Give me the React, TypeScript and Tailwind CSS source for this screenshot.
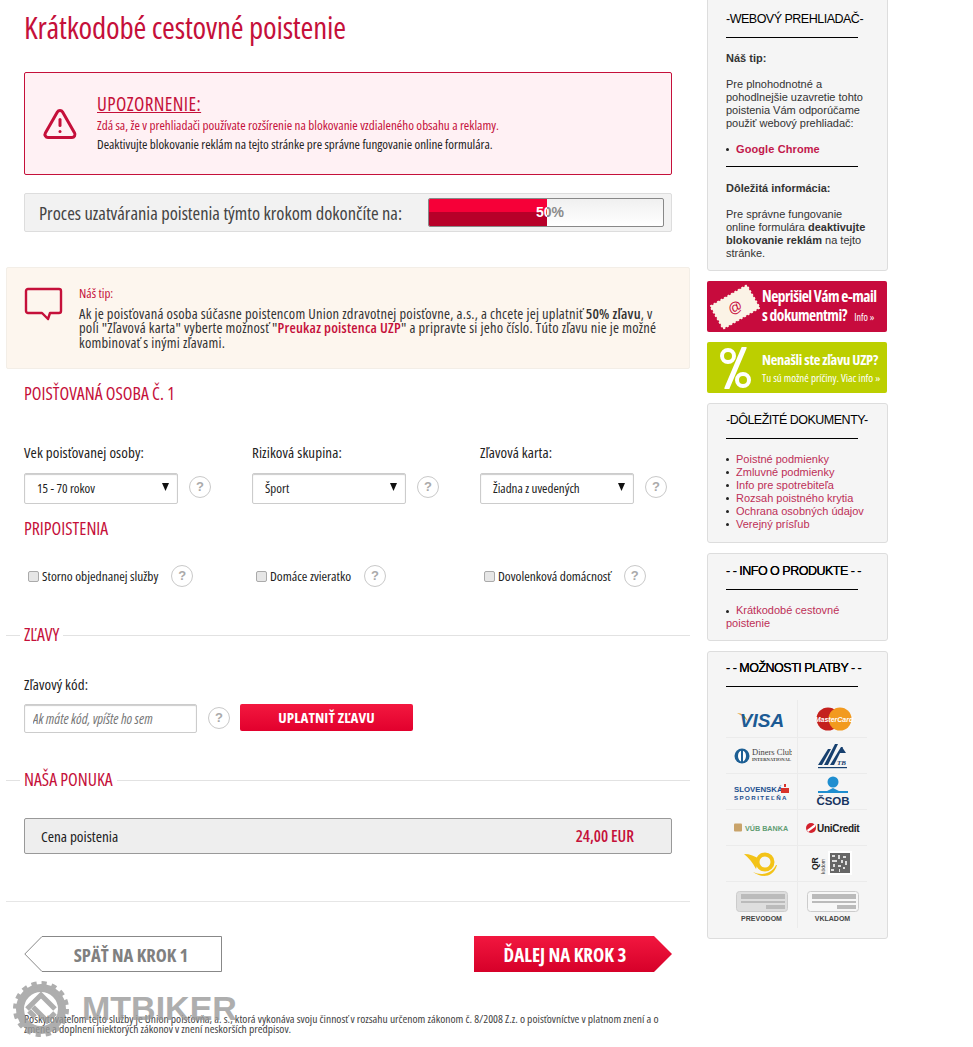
import React from 'react';
import { TriangleAlert } from 'lucide-react';

const condensed = "font-['Open_Sans',sans-serif] font-stretch-[75%]";
const red = 'text-[#c5103a]';

const Help = () => (
    <span className="flex h-[22px] w-[22px] shrink-0 items-center justify-center rounded-full border border-[#c9c9c9] bg-white font-['Liberation_Sans',sans-serif] text-[13px] font-bold text-[#aaaaaa]">
        ?
    </span>
);

const FakeSelect = ({ label }: { label: string }) => (
    <div className="flex w-[228px] shrink-0 items-start gap-[11px]">
        <div className="flex h-[31px] w-[154px] items-center justify-between rounded-[2px] border border-[#cccccc] pl-3 pr-[8px] text-[13px] text-[#222222] shadow-[inset_0_1px_1px_#ccc]">
            <span>{label}</span>
            <svg width="7" height="8" viewBox="0 0 7 8" className="mb-1"><path d="M0 0h7L3.5 8z" fill="#111" /></svg>
        </div>
        <span className="mt-[3px]"><Help /></span>
    </div>
);

const Check = ({ label }: { label: string }) => (
    <label className="flex w-[228px] shrink-0 items-center pl-1 text-[13.4px] text-[#222222]">
        <input type="checkbox" className="mr-[3px] h-[11px] w-[11px] appearance-none rounded-[2px] border border-[#aaaaaa] bg-[#e6e6e6]" />
        <span>{label}</span>
        <span className="ml-[13px]"><Help /></span>
    </label>
);

const SectionLine = ({ title, className }: { title: string; className: string }) => (
    <div className={`flex h-5 items-center ${className}`}>
        <div className="h-px w-[14px] bg-[#e2e2e2]" />
        <span className={`mx-1 pb-[2px] text-[17.8px] ${red}`}>{title}</span>
        <div className="h-px flex-1 bg-[#e2e2e2]" />
    </div>
);

const SideBox = ({ className, children }: { className: string; children: React.ReactNode }) => (
    <div className={`rounded-[3px] border border-[#dddddd] bg-[#f5f5f5] pl-[18px] pr-2 text-[11px] leading-[13px] text-[#333333] ${className}`}>
        {children}
    </div>
);

const SideHead = ({ children, strong }: { children: React.ReactNode; strong?: boolean }) => (
    <div>
        <div className={`whitespace-nowrap text-[12.5px] leading-[15px] tracking-[-.5px] text-black ${strong ? '[text-shadow:0_0_.6px_#000]' : ''}`}>{children}</div>
        <div className="mt-[10px] h-px w-[132px] bg-black" />
    </div>
);

const Bullet = () => <span className="mr-[7px] inline-block h-[3px] w-[3px] shrink-0 rounded-full bg-[#222222] align-middle" />;

const DocLink = ({ children }: { children: React.ReactNode }) => (
    <li className="flex items-center">
        <Bullet />
        <span className="text-[#bd2f57]">{children}</span>
    </li>
);

const logos = [
    <svg key="visa" width="60" height="30" viewBox="0 0 60 30">
        <path d="M5 9c5 0 9 3 11 9-3-4-6-6-11-9z" fill="#e8a93a" />
        <text x="30" y="23" textAnchor="middle" fontFamily="Liberation Sans" fontStyle="italic" fontWeight="700" fontSize="19" fill="#1c5a94">VISA</text>
    </svg>,
    <svg key="mc" width="50" height="30" viewBox="0 0 50 30">
        <circle cx="20" cy="15" r="11.5" fill="#c4201d" />
        <circle cx="32" cy="15" r="11.5" fill="#f29a1f" />
        <text x="26" y="18" textAnchor="middle" fontFamily="Liberation Sans" fontWeight="700" fontStyle="italic" fontSize="7" fill="#fff">MasterCard</text>
    </svg>,
    <svg key="diners" width="60" height="22" viewBox="0 0 60 22">
        <circle cx="10" cy="11" r="7.5" fill="#1d5f94" />
        <ellipse cx="10" cy="11" rx="4" ry="5.5" fill="#fff" />
        <rect x="9" y="5" width="2" height="12" fill="#1d5f94" />
        <text x="20" y="10" fontFamily="Liberation Serif" fontSize="8.5" fill="#444">Diners Club</text>
        <text x="20" y="15.5" fontFamily="Liberation Serif" fontWeight="700" fontSize="4.6" fill="#444">INTERNATIONAL</text>
    </svg>,
    <svg key="tb" width="32" height="28" viewBox="0 0 32 28">
        <path d="M1 23 11 7h3L5 23zM7 23 18 2h3L11 23zM13 23 24 5h2l-9 18zM21 11l4-6 4 6z" fill="#17406f" />
        <rect x="1" y="25" width="29" height="1.2" fill="#17406f" />
        <text x="20" y="23" fontFamily="Liberation Serif" fontStyle="italic" fontWeight="700" fontSize="7" fill="#17406f">TB</text>
    </svg>,
    <svg key="slsp" width="56" height="26" viewBox="0 0 56 26">
        <text x="0" y="13" fontFamily="Liberation Sans" fontWeight="700" fontSize="7.8" fill="#1c4f8f">SLOVENSKÁ</text>
        <text x="0" y="21" fontFamily="Liberation Sans" fontWeight="700" fontSize="6.2" letterSpacing="1.4" fill="#1c4f8f">SPORITEĽŇA</text>
        <path d="M47 9h8v5h-8zM50 5h2v3h-2z" fill="#d8322a" />
    </svg>,
    <svg key="csob" width="34" height="32" viewBox="0 0 34 32">
        <circle cx="17" cy="6" r="5.5" fill="#1f8ed0" />
        <path d="M2 15h9l6-3 6 3h9v2H2z" fill="#1f8ed0" />
        <text x="17" y="29" textAnchor="middle" fontFamily="Liberation Sans" fontWeight="700" fontSize="11.5" fill="#17335f">ČSOB</text>
    </svg>,
    <svg key="vub" width="56" height="14" viewBox="0 0 56 14">
        <rect x="0" y="2.5" width="8" height="8" rx="1" fill="#c9a36a" />
        <text x="11" y="10" fontFamily="Liberation Sans" fontWeight="700" fontSize="7.2" fill="#5f9c72">VÚB BANKA</text>
    </svg>,
    <svg key="uni" width="56" height="16" viewBox="0 0 56 16">
        <circle cx="6" cy="8" r="5" fill="#d3212d" />
        <path d="M2 10 10 4v3l-7 5z" fill="#fff" />
        <text x="12" y="12" fontFamily="Liberation Sans" fontWeight="700" fontSize="10" letterSpacing="-.3" fill="#222">UniCredit</text>
    </svg>,
    <svg key="post" width="36" height="25" viewBox="0 0 36 25">
        <circle cx="21" cy="11" r="7.5" fill="none" stroke="#f3c318" strokeWidth="4" />
        <path d="M0 3c6 0 11 2 15 5l-3 10C9 12 5 7 0 3zM9 21c8 4 19 2 23-7l1 0c-2 8-8 11-13 11-4 0-8-2-11-4z" fill="#f3c318" />
    </svg>,
    <svg key="qr" width="46" height="28" viewBox="0 0 46 28">
        <text x="0" y="0" transform="translate(8 20) rotate(-90)" fontFamily="Liberation Sans" fontWeight="700" fontSize="8.5" fill="#222">QR</text>
        <text x="0" y="0" transform="translate(15 24) rotate(-90)" fontFamily="Liberation Sans" fontSize="5" fill="#333">kódom</text>
        <rect x="18" y="1" width="24" height="24" fill="#fff" />
        <path d="M20 3h20v20H20z" fill="#666" />
        <path d="M22 5h3v2h-3zM28 5h2v4h-2zM33 6h3v2h-3zM22 10h5v2h-5zM31 10h2v3h-2zM35 11h2v4h-2zM23 14h2v3h-2zM28 15h3v2h-3zM33 17h2v2h-2zM21 19h3v2h-3zM29 19h1v3h-1z" fill="#dddddd" />
    </svg>,
];

const SlipLogo = ({ label, dark }: { label: string; dark: boolean }) => (
    <div className="flex flex-col items-center gap-[2px] pt-[4px]">
        <svg width="52" height="21" viewBox="0 0 52 21">
            <rect x=".5" y=".5" width="51" height="20" rx="3" fill={dark ? '#dedede' : '#f7f7f7'} stroke="#cccccc" />
            <rect x="5" y="3" width="44" height="5" fill="#bbbbbb" />
            <rect x="5" y="10" width="44" height="2" fill="#bbbbbb" />
            <rect x="30" y="14" width="19" height="4" fill="#bbbbbb" />
        </svg>
        <span className="text-[7px] font-bold leading-[9px] text-[#444444]">{label}</span>
    </div>
);

export default function App() {
    return (
        <div className="relative flex h-[1047px] w-[973px] overflow-hidden bg-white font-['Liberation_Sans',sans-serif]">
            <main className={`w-[690px] shrink-0 pl-[6px] ${condensed}`}>
                <h1 className={`h-[72px] pl-[18px] pt-[5px] text-[31px] leading-[44px] tracking-[-.2px] ${red}`}>Krátkodobé cestovné poistenie</h1>

                <div className="ml-[18px] flex h-[103px] w-[648px] items-center rounded-[2px] border border-[#c5103a] bg-[#fff1f4]">
                    <TriangleAlert className={`ml-[17px] h-[36px] w-[36px] ${red}`} strokeWidth={2} />
                    <div className="ml-[19px]">
                        <div className={`text-[19px] leading-[20px] tracking-[.4px] underline ${red}`}>UPOZORNENIE:</div>
                        <div className={`mt-[2px] text-[13.1px] font-medium leading-[18px] ${red}`}>Zdá sa, že v prehliadači používate rozšírenie na blokovanie vzdialeného obsahu a reklamy.</div>
                        <div className="text-[13px] leading-[20px] text-[#222222]">Deaktivujte blokovanie reklám na tejto stránke pre správne fungovanie online formulára.</div>
                    </div>
                </div>

                <div className="ml-[18px] mt-[18px] flex h-[39px] w-[648px] items-center justify-between rounded-[2px] border border-[#dddddd] bg-[#f2f2f2] pl-[14px] pr-[7px]">
                    <span className="text-[18.5px] text-[#444444]">Proces uzatvárania poistenia týmto krokom dokončíte na:</span>
                    <div className="relative h-[29px] w-[236px] overflow-hidden rounded-[2px] border border-[#888888] bg-gradient-to-b from-[#f0f0f0] to-white font-['Liberation_Sans',sans-serif] text-[14px] font-bold leading-[27px]">
                        <div className="pl-2 text-center text-[#8a8a8a]">50%</div>
                        <div className="absolute inset-y-0 left-0 w-[118px] overflow-hidden bg-[linear-gradient(#f60038_50%,#b70029_50%)]">
                            <div className="w-[234px] pl-2 text-center text-white">50%</div>
                        </div>
                    </div>
                </div>

                <div className="mt-[35px] flex h-[102px] w-[684px] rounded-[2px] border border-[#f3eee7] bg-[#fdf6ee] pl-[17px] pt-[18px]">
                    <svg width="40" height="34" viewBox="0 0 40 34" className="mt-px shrink-0">
                        <path d="M4 2h31a2 2 0 0 1 2 2v20a2 2 0 0 1-2 2H26l-2 6-6-6H4a2 2 0 0 1-2-2V4a2 2 0 0 1 2-2z" fill="none" stroke="#c5103a" strokeWidth="2.4" strokeLinejoin="round" />
                    </svg>
                    <div className="ml-[15px] whitespace-nowrap text-[14.5px] leading-[14.5px] tracking-[.22px] text-[#333333]">
                        <div className={`mb-[6px] text-[13px] tracking-normal ${red}`}>Náš tip:</div>
                        Ak je poisťovaná osoba súčasne poistencom Union zdravotnej poisťovne, a.s., a chcete jej uplatniť <b className="font-semibold">50% zľavu</b>, v<br />
                        poli "Zľavová karta" vyberte možnosť "<b className={`font-semibold ${red}`}>Preukaz poistenca UZP</b>" a pripravte si jeho číslo. Túto zľavu nie je možné<br />
                        kombinovať s inými zľavami.
                    </div>
                </div>

                <div className={`ml-[18px] mt-[15px] h-5 text-[17.8px] leading-[18px] ${red}`}>POISŤOVANÁ OSOBA Č. 1</div>

                <div className="ml-[18px] mt-[38px] flex h-5 text-[15px] leading-[20px] tracking-[.1px] text-[#222222]">
                    <span className="w-[228px] shrink-0">Vek poisťovanej osoby:</span>
                    <span className="w-[228px] shrink-0">Riziková skupina:</span>
                    <span className="w-[228px] shrink-0">Zľavová karta:</span>
                </div>
                <div className="ml-[18px] mt-[11px] flex">
                    <FakeSelect label="15 - 70 rokov" />
                    <FakeSelect label="Šport" />
                    <FakeSelect label="Žiadna z uvedených" />
                </div>

                <div className={`ml-[18px] mt-[15px] h-5 text-[17.8px] leading-[18px] ${red}`}>PRIPOISTENIA</div>

                <div className="ml-[18px] mt-[25px] flex h-6 items-center">
                    <Check label="Storno objednanej služby" />
                    <Check label="Domáce zvieratko" />
                    <Check label="Dovolenková domácnosť" />
                </div>

                <SectionLine title="ZĽAVY" className="mt-[37px]" />

                <div className="ml-[18px] mt-[29px] h-5 text-[15px] leading-[20px] tracking-[.1px] text-[#222222]">Zľavový kód:</div>
                <div className="ml-[18px] mt-[10px] flex items-start">
                    <input readOnly placeholder="Ak máte kód, vpíšte ho sem" className="h-[29px] w-[173px] rounded-[2px] border border-[#cccccc] pl-2 text-[14px] italic shadow-[inset_0_1px_1px_#ccc] placeholder:text-[#777777]" />
                    <span className="ml-[11px] mt-[3px]"><Help /></span>
                    <button className="ml-[10px] h-[27px] w-[173px] rounded-[2px] bg-[linear-gradient(#f3183f,#e2002d)] text-[15px] font-bold tracking-[.1px] text-white">UPLATNIŤ ZĽAVU</button>
                </div>

                <SectionLine title="NAŠA PONUKA" className="mt-[37px]" />

                <div className="ml-[18px] mt-[28px] flex h-[36px] w-[648px] items-center justify-between rounded-[2px] border border-[#999999] bg-[#eeeeee] pl-4 pr-[37px]">
                    <span className="text-[15.2px] text-[#222222]">Cena poistenia</span>
                    <span className={`text-[16px] font-semibold ${red}`}>24,00 EUR</span>
                </div>

                <div className="mt-[47px] h-px bg-[#e6e6e6]" />

                <div className="ml-[18px] mt-[34px] flex h-[36px] w-[648px] justify-between">
                    <div className="relative flex w-[198px] items-center justify-center pl-[16px] pt-[2px] text-[18.6px] font-bold text-[#808080]">
                        <svg className="absolute inset-0" width="198" height="36" viewBox="0 0 198 36">
                            <path d="M18 .5H197.5v35H18L.8 18z" fill="#fff" stroke="#888888" />
                        </svg>
                        <span className="relative">SPÄŤ NA KROK 1</span>
                    </div>
                    <div className="flex w-[198px] items-center justify-center pr-[16px] pt-[2px] text-[19px] font-bold text-white [clip-path:polygon(0_0,180px_0,100%_50%,180px_100%,0_100%)] bg-[linear-gradient(#f2173f,#d60029)]">
                        ĎALEJ NA KROK 3
                    </div>
                </div>

                <p className="ml-[18px] mt-[42px] whitespace-nowrap text-[11.55px] leading-[10px] text-[#444444]">
                    Poskytovateľom tejto služby je Union poisťovňa, a. s., ktorá vykonáva svoju činnosť v rozsahu určenom zákonom č. 8/2008 Z.z. o poisťovníctve v platnom znení a o<br />
                    zmene a doplnení niektorých zákonov v znení neskorších predpisov.
                </p>
            </main>

            <aside className="ml-[17px] flex w-[181px] shrink-0 flex-col gap-[10px]">
                <SideBox className="-mt-[10px] h-[281px] pt-[21px]">
                    <SideHead>-WEBOVÝ PREHLIADAČ-</SideHead>
                    <div className="mt-[14px] font-bold">Náš tip:</div>
                    <p className="mt-[13px]">Pre plnohodnotné a<br />pohodlnejšie uzavretie tohto<br />poistenia Vám odporúčame<br />použiť webový prehliadač:</p>
                    <div className="mt-[13px] flex items-center font-bold tracking-[.1px]">
                        <Bullet />
                        <span className="text-[#c2184b]">Google Chrome</span>
                    </div>
                    <div className="mt-[10px] h-px w-[132px] bg-black" />
                    <div className="mt-[15px] font-bold">Dôležitá informácia:</div>
                    <p className="mt-[13px]">Pre správne fungovanie<br />online formulára <b>deaktivujte<br />blokovanie reklám</b> na tejto<br />stránke.</p>
                </SideBox>

                <div className={`flex h-[51px] w-[180px] items-center rounded-[2px] bg-[#c70b3d] text-white ${condensed}`}>
                    <svg width="52" height="46" viewBox="0 0 52 46" className="ml-[2px] shrink-0">
                        <g transform="rotate(-30 26 23)">
                            <rect x="5" y="10" width="42" height="26" fill="#fbf3e6" stroke="#fbf3e6" strokeWidth="2" strokeDasharray="2 2" />
                            <text x="26" y="28" textAnchor="middle" fontFamily="Liberation Sans" fontSize="14" fill="#c70b3d">@</text>
                        </g>
                    </svg>
                    <div className="ml-[1px] whitespace-nowrap text-[15.5px] font-bold leading-[19px] tracking-[-.5px]">
                        Neprišiel Vám e-mail<br />s dokumentmi? <span className="ml-[5px] text-[10px] font-normal tracking-normal">Info »</span>
                    </div>
                </div>

                <div className={`flex h-[51px] w-[180px] items-center rounded-[2px] bg-[#bccf00] pl-3 text-white ${condensed}`}>
                    <svg width="32" height="42" viewBox="0 0 32 42" className="shrink-0">
                        <circle cx="9" cy="9" r="6" fill="none" stroke="#fff" strokeWidth="4" />
                        <circle cx="24" cy="33" r="6" fill="none" stroke="#fff" strokeWidth="4" />
                        <path d="M25 1 8 41" stroke="#fff" strokeWidth="5" strokeLinecap="round" />
                    </svg>
                    <div className="ml-[11px] whitespace-nowrap">
                        <div className="text-[14.5px] font-bold leading-[20px] tracking-[-.3px]">Nenašli ste zľavu UZP?</div>
                        <div className="text-[11px] leading-[16px]">Tu sú možné príčiny. Viac info »</div>
                    </div>
                </div>

                <SideBox className="h-[140px] pt-[9px]">
                    <SideHead>-DÔLEŽITÉ DOKUMENTY-</SideHead>
                    <ul className="mt-[14px]">
                        <DocLink>Poistné podmienky</DocLink>
                        <DocLink>Zmluvné podmienky</DocLink>
                        <DocLink>Info pre spotrebiteľa</DocLink>
                        <DocLink>Rozsah poistného krytia</DocLink>
                        <DocLink>Ochrana osobných údajov</DocLink>
                        <DocLink>Verejný prísľub</DocLink>
                    </ul>
                </SideBox>

                <SideBox className="h-[88px] pt-[10px]">
                    <SideHead strong>- - INFO O PRODUKTE - -</SideHead>
                    <div className="mt-[14px]">
                        <Bullet />
                        <span className="text-[#bd2f57]">Krátkodobé cestovné<br />poistenie</span>
                    </div>
                </SideBox>

                <SideBox className="h-[288px] pt-[9px]">
                    <SideHead strong>- - MOŽNOSTI PLATBY - -</SideHead>
                    <div className="mt-[13px] grid w-[141px] grid-cols-[72px_69px] grid-rows-[38px_36px_36px_36px_36px_46px]">
                        {logos.map((logo, i) => (
                            <div key={i} className={`flex items-center justify-center border-b border-[#ebebeb] ${i % 2 === 0 ? 'border-r' : ''}`}>
                                {logo}
                            </div>
                        ))}
                        <div className="flex items-center justify-center border-r border-[#ebebeb]"><SlipLogo label="PREVODOM" dark /></div>
                        <div className="flex items-center justify-center"><SlipLogo label="VKLADOM" dark={false} /></div>
                    </div>
                </SideBox>
            </aside>

            <div className="pointer-events-none absolute left-[13px] top-[981px] flex items-center opacity-80">
                <svg width="56" height="56" viewBox="0 0 56 56">
                    <circle cx="28" cy="28" r="21" fill="none" stroke="#9a9a9a" strokeWidth="8" />
                    <circle cx="28" cy="28" r="25" fill="none" stroke="#9a9a9a" strokeWidth="6" strokeDasharray="5 4.8" />
                    <path d="M14 28 28 14l14 14M22 36l-6-6M20 26l14 14 8-8" fill="none" stroke="#9a9a9a" strokeWidth="5" />
                </svg>
                <span className="mb-[2px] ml-[13px] font-['Liberation_Sans',sans-serif] text-[34px] font-bold leading-none text-[#9a9a9a]">MTBIKER</span>
            </div>
        </div>
    );
}
